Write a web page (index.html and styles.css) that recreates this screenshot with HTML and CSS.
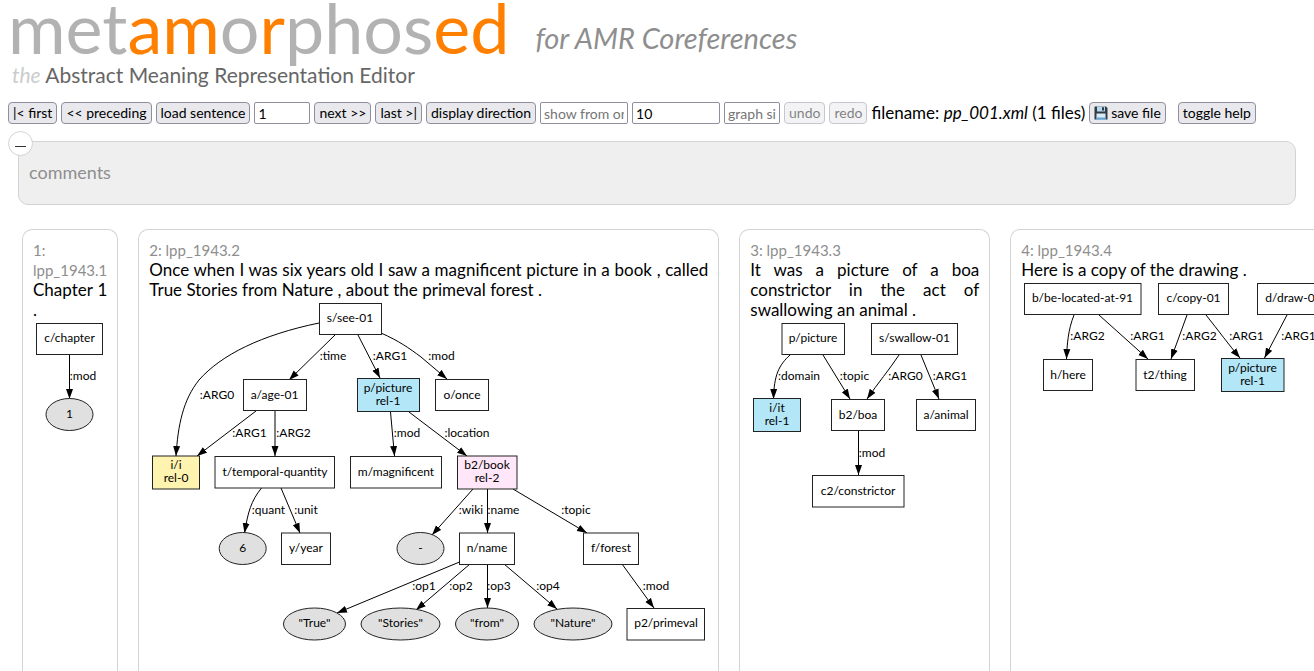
FILE: index.html
```html
<!DOCTYPE html>
<html lang="en">
<head>
<meta charset="utf-8">
<title>metamorphosed</title>
<link rel="stylesheet" href="styles.css">
</head>
<body>
<header class="header">
  <div class="logo">
    <h1 class="wordmark">met<b>am</b>o<b>r</b>phos<b>ed</b></h1>
    <p class="tagline"><i>the</i> Abstract Meaning Representation Editor</p>
  </div>
  <p class="subtitle">for AMR Coreferences</p>
</header>

<form class="toolbar">
  <button type="button">|&lt; first</button>
  <button type="button">&lt;&lt; preceding</button>
  <button type="button">load sentence</button>
  <input class="short" type="text" value="1" aria-label="sentence number">
  <button type="button">next &gt;&gt;</button>
  <button type="button">last &gt;|</button>
  <button type="button">display direction</button>
  <input class="long" type="text" placeholder="show from only" aria-label="show from only">
  <input class="long" type="text" value="10" aria-label="number of sentences">
  <input class="short" type="text" placeholder="graph size" aria-label="graph size">
  <button type="button" disabled>undo</button>
  <button type="button" disabled>redo</button>
  <span class="filename">filename: <i>pp_001.xml</i> (1 files)</span>
  <button type="button" class="save"><svg class="disk" viewBox="0 0 14 14" aria-hidden="true"><path d="M1 .5h11l1.500 1.500v11.500h-13v-12.500z" fill="#2f3c46"/><path d="M3 .5h8v5h-8z" fill="#b8d8ee"/><path d="M8 1.200h2v3.300h-2z" fill="#2f3c46"/><path d="M2.500 7.500h9v6h-9z" fill="#dceaf4"/><path d="M2.500 11.500h9v2h-9z" fill="#5ea5d8"/></svg>save file</button>
  <button type="button" class="help">toggle help</button>
</form>

<section class="comments">
  <button type="button" class="fold" aria-label="fold comments"><span></span></button>
  <p>comments</p>
</section>

<svg class="defs" aria-hidden="true"><defs><marker id="arrow" markerUnits="userSpaceOnUse" markerWidth="12" markerHeight="8" refX="10" refY="4" orient="auto"><path d="M0 .5L10 4L0 7.500z"/></marker></defs></svg>

<main class="sentences">
  <article class="card">
    <h2>1: lpp_1943.1</h2>
    <p>Chapter 1 .</p>
    <svg class="graph" width="73" height="120" viewBox="33 320 73 120">
      <g class="edges"><path d="M69.500 355V399"/></g>
      <g class="nodes"><rect x="36.500" y="323.500" width="66" height="31"/><ellipse cx="69.500" cy="414.500" rx="23.500" ry="16"/></g>
      <text x="69.500" y="342">c/chapter</text><text x="69.500" y="418">1</text><text x="83" y="380">:mod</text>
    </svg>
  </article>

  <article class="card">
    <h2>2: lpp_1943.2</h2>
    <p>Once when I was six years old I saw a magnificent picture in a book , called True Stories from Nature , about the primeval forest .</p>
    <svg class="graph" width="559" height="345" viewBox="148 300 559 345">
      <g class="edges">
        <path d="M318 323C260 335 220 355 198 380C182 400 177 425 175 456"/>
        <path d="M334 335L288 380"/><path d="M357 335L379 378"/><path d="M380 333C398 341 408 348 420 357L446 379"/>
        <path d="M255 411L196 456"/><path d="M274 411V456"/><path d="M389.500 412L393.500 456"/><path d="M408 412L466 456"/>
        <path d="M260.500 488C250 501 247 512 243.500 533"/><path d="M280 488L299 533"/>
        <path d="M472 489L431 535"/><path d="M486.500 489V533"/><path d="M512 489L586 533"/>
        <path d="M458.500 562L336 613"/><path d="M469 564L415 610"/><path d="M486.500 564V608"/><path d="M503 564L556 609"/><path d="M621 564L653 608"/>
      </g>
      <g class="nodes">
        <rect x="318.500" y="303.500" width="62" height="31"/>
        <rect x="242.500" y="379.500" width="63" height="31"/>
        <rect class="blue" x="356.500" y="378.500" width="62" height="33"/>
        <rect x="434.500" y="379.500" width="53" height="31"/>
        <rect class="yellow" x="151.500" y="456" width="47" height="33"/>
        <rect x="214" y="456.500" width="119.500" height="31.500"/>
        <rect x="349.500" y="456.500" width="91" height="31.500"/>
        <rect class="pink" x="456.500" y="456" width="59.500" height="33"/>
        <ellipse cx="241.700" cy="548.500" rx="23.500" ry="16"/>
        <rect x="280.500" y="533" width="49" height="31.500"/>
        <ellipse cx="419.500" cy="548.500" rx="23.500" ry="16"/>
        <rect x="458.500" y="533" width="55" height="31.500"/>
        <rect x="582.500" y="533" width="55" height="31.500"/>
        <ellipse cx="313.500" cy="624" rx="31" ry="16"/>
        <ellipse cx="399.500" cy="624" rx="39.500" ry="16"/>
        <ellipse cx="486" cy="624" rx="31.500" ry="16"/>
        <ellipse cx="572" cy="624" rx="39" ry="16"/>
        <rect x="626" y="608.500" width="77.500" height="31.500"/>
      </g>
      <text x="349" y="322">s/see-01</text>
      <text x="332" y="360">:time</text><text x="389" y="360">:ARG1</text><text x="440.500" y="360">:mod</text>
      <text x="216" y="399">:ARG0</text><text x="273.500" y="399">a/age-01</text><text x="387" y="392">p/picture</text><text x="387" y="405">rel-1</text><text x="461" y="399">o/once</text>
      <text x="248.500" y="437">:ARG1</text><text x="292.500" y="437">:ARG2</text><text x="406" y="437">:mod</text><text x="466" y="437">:location</text>
      <text x="175" y="469">i/i</text><text x="175" y="482">rel-0</text><text x="274" y="476">t/temporal-quantity</text><text x="395" y="476">m/magnificent</text><text x="486" y="469">b2/book</text><text x="486" y="482">rel-2</text>
      <text x="267.500" y="514">:quant</text><text x="305" y="514">:unit</text><text x="470" y="514">:wiki</text><text x="502.500" y="514">:name</text><text x="575" y="514">:topic</text>
      <text x="241.700" y="552">6</text><text x="305" y="552">y/year</text><text x="419.500" y="552">-</text><text x="486" y="552">n/name</text><text x="610" y="552">f/forest</text>
      <text x="423" y="590">:op1</text><text x="460" y="590">:op2</text><text x="498" y="590">:op3</text><text x="547" y="590">:op4</text><text x="655" y="590">:mod</text>
      <text x="313.500" y="627">"True"</text><text x="399.500" y="627">"Stories"</text><text x="486" y="627">"from"</text><text x="572" y="627">"Nature"</text><text x="665" y="627">p2/primeval</text>
    </svg>
  </article>

  <article class="card">
    <h2>3: lpp_1943.3</h2>
    <p>It was a picture of a boa constrictor in the act of swallowing an animal .</p>
    <svg class="graph" width="229" height="192" viewBox="749 320 229 192">
      <g class="edges">
        <path d="M789 355C778 365 773 375 772.500 399"/><path d="M822 355L849 399"/><path d="M898 355C888 370 877 383 866 399"/><path d="M920 355L938 399"/><path d="M857.500 431V475"/>
      </g>
      <g class="nodes">
        <rect x="781" y="323.500" width="62.500" height="31"/><rect x="870.500" y="323.500" width="86" height="31"/>
        <rect class="blue" x="752.500" y="398.500" width="47" height="33"/><rect x="830.500" y="399.500" width="53" height="31"/><rect x="915.500" y="399.500" width="59" height="31"/>
        <rect x="811.500" y="475.500" width="91.500" height="31.500"/>
      </g>
      <text x="812" y="342">p/picture</text><text x="913.500" y="342">s/swallow-01</text>
      <text x="798" y="380">:domain</text><text x="853.500" y="380">:topic</text><text x="904.500" y="380">:ARG0</text><text x="949" y="380">:ARG1</text>
      <text x="776" y="412">i/it</text><text x="776" y="425">rel-1</text><text x="857" y="419">b2/boa</text><text x="945" y="419">a/animal</text>
      <text x="871" y="457">:mod</text><text x="857" y="495">c2/constrictor</text>
    </svg>
  </article>

  <article class="card">
    <h2>4: lpp_1943.4</h2>
    <p>Here is a copy of the drawing .</p>
    <svg class="graph" width="312" height="117" viewBox="1020 280 312 117">
      <g class="edges">
        <path d="M1073 315C1067 330 1066 345 1065.500 359"/><path d="M1098 315L1147 359"/><path d="M1186 315L1170 359"/><path d="M1205 315C1217 330 1228 345 1239 358"/><path d="M1286 315L1263.500 358"/>
      </g>
      <g class="nodes">
        <rect x="1023.500" y="283.500" width="116.500" height="31"/><rect x="1157.500" y="283.500" width="70" height="31"/><rect x="1256.500" y="283.500" width="72" height="31"/>
        <rect x="1042.500" y="359.500" width="49" height="31"/><rect x="1135" y="359.500" width="58.500" height="31"/><rect class="blue" x="1220.500" y="358.500" width="62.500" height="33"/>
      </g>
      <text x="1081.500" y="302">b/be-located-at-91</text><text x="1192.500" y="302">c/copy-01</text><text x="1292.500" y="302">d/draw-01</text>
      <text x="1086.500" y="340">:ARG2</text><text x="1146.500" y="340">:ARG1</text><text x="1198.500" y="340">:ARG2</text><text x="1245.500" y="340">:ARG1</text><text x="1297.500" y="340">:ARG1</text>
      <text x="1067" y="379">h/here</text><text x="1164" y="379">t2/thing</text><text x="1251.500" y="372">p/picture</text><text x="1251.500" y="385">rel-1</text>
    </svg>
  </article>
</main>
</body>
</html>
```

FILE: styles.css
```css
* { box-sizing: border-box; }

body {
  margin: 0;
  height: 100vh;
  overflow: hidden;
  display: flex;
  flex-direction: column;
  font: 17px/20px Lato, "Noto Sans", sans-serif;
  color: #000;
  background: #fff;
}

h1, h2, p { margin: 0; font-weight: 400; }

.header {
  display: flex;
  gap: 26px;
  padding: 0 8px 16px;
}

.wordmark {
  padding-bottom: 10px;
  font-size: 70px;
  line-height: 54px;
  color: #b2b2b2;
}
.wordmark b { font-weight: 400; color: #ff8000; }

.tagline { font-size: 21px; line-height: 22px; color: #666; padding-left: 4px; }
.tagline i { color: #ccc; }

.subtitle {
  padding-top: 20px;
  font-size: 29px;
  line-height: 36px;
  font-style: italic;
  color: #8e8e8e;
}

.toolbar {
  display: flex;
  align-items: center;
  gap: 4px;
  padding: 0 8px;
  white-space: nowrap;
}

.toolbar button, .toolbar input {
  height: 22px;
  font: 14px/18px Lato, "Noto Sans", sans-serif;
  border: 1px solid #8f8f9d;
}
.toolbar button {
  padding: 0 4px;
  border-radius: 4px;
  background: #e9e9ed;
  color: #000;
}
.toolbar button:disabled { opacity: .5; }
.toolbar input { padding: 0 3px; border-radius: 2px; background: #fff; min-width: 0; }
.toolbar input::placeholder { color: #757575; opacity: 1; }
.toolbar .short { width: 56px; }
.toolbar .long { width: 88px; }
.toolbar .help { margin-left: 8px; }
.toolbar .save { display: flex; align-items: center; gap: 3px; }
.disk { width: 14px; height: 14px; }

.comments {
  position: relative;
  margin: 17px 18px 24px;
  padding: 20px 10px 22px;
  border: 1px solid #d3d3d3;
  border-radius: 10px;
  background: #efefef;
  color: #8e8e8e;
  font-size: 18px;
}
.fold {
  position: absolute;
  top: -11px;
  left: -11px;
  width: 25px;
  height: 25px;
  padding: 5px 0 0;
  border: 1px solid #d3d3d3;
  border-radius: 50%;
  background: #fff;
}
.fold span { display: block; width: 11px; height: 1px; margin: 0 auto; background: #333; }

.defs { position: absolute; width: 0; height: 0; }

.sentences {
  flex: 1;
  min-height: 0;
  display: flex;
  gap: 20px;
  padding-left: 22px;
}

.card {
  flex: none;
  width: min-content;
  padding: 10px;
  border: 1px solid #d3d3d3;
  border-bottom: 0;
  border-radius: 10px 10px 0 0;
  text-align: justify;
}
.card h2 { font-size: 15px; line-height: 20px; color: #8e8e8e; text-align: left; }

.graph { display: block; font-size: 12px; text-anchor: middle; }
.edges path { fill: none; stroke: #000; marker-end: url(#arrow); }
.nodes { fill: #fff; stroke: #222; }
.nodes ellipse { fill: #e0e0e0; }
.nodes .blue { fill: #b3e7f7; }
.nodes .yellow { fill: #fff3b0; }
.nodes .pink { fill: #ffe6f8; }
```
